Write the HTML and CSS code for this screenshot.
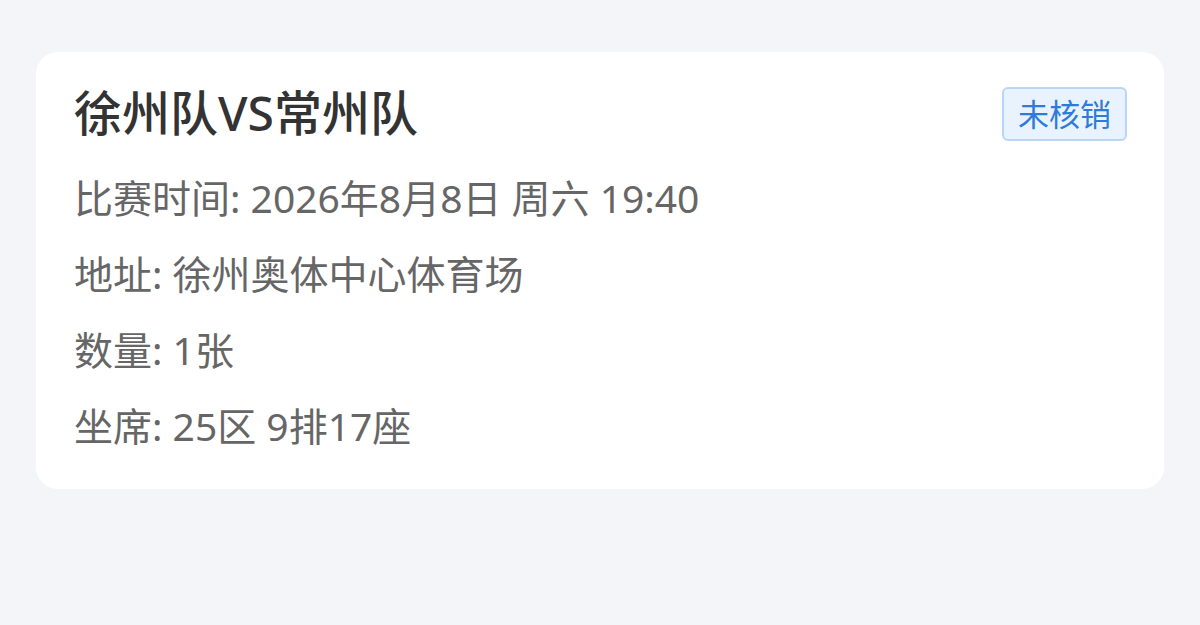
FILE: index.html
```html
<!DOCTYPE html>
<html lang="zh-CN">
<head>
  <meta charset="UTF-8">
  <meta name="viewport" content="width=device-width, initial-scale=1.0">
  <title>票务详情</title>
  <link rel="stylesheet" href="styles.css">
</head>
<body>

  <div class="ticket-card">
    <div class="ticket-head">
      <h1 class="ticket-title">徐州队VS常州队</h1>
      <span class="status-tag">未核销</span>
    </div>
    <p class="ticket-row">比赛时间: 2026年8月8日 周六 19:40</p>
    <p class="ticket-row">地址: 徐州奥体中心体育场</p>
    <p class="ticket-row">数量: 1张</p>
    <p class="ticket-row">坐席: 25区 9排17座</p>
  </div>

</body>
</html>
```

FILE: styles.css
```css
body {
  font-family: "Noto Sans", "Noto Sans CJK SC", sans-serif;
  margin: 0;
  padding: 52px 36px;
  background-color: #f4f5f9;
}
.ticket-card {
  background: #fff;
  border-radius: 22px;
  padding: 28px 37px 25px 38px;
}
.ticket-head {
  display: flex;
  justify-content: space-between;
  align-items: flex-start;
  margin-bottom: 14px;
}
.ticket-title {
  margin: 0;
  font-size: 48px;
  font-weight: 500;
  line-height: 66px;
  color: #333;
}
.status-tag {
  margin-top: 7px;
  padding: 0 14px;
  height: 50px;
  line-height: 50px;
  font-size: 31px;
  color: #2f7bd8;
  background: #e8f3ff;
  border: 2px solid #b9d5f4;
  border-radius: 6px;
}
.ticket-row {
  margin: 0;
  font-size: 39px;
  line-height: 76px;
  color: #666;
}
```
